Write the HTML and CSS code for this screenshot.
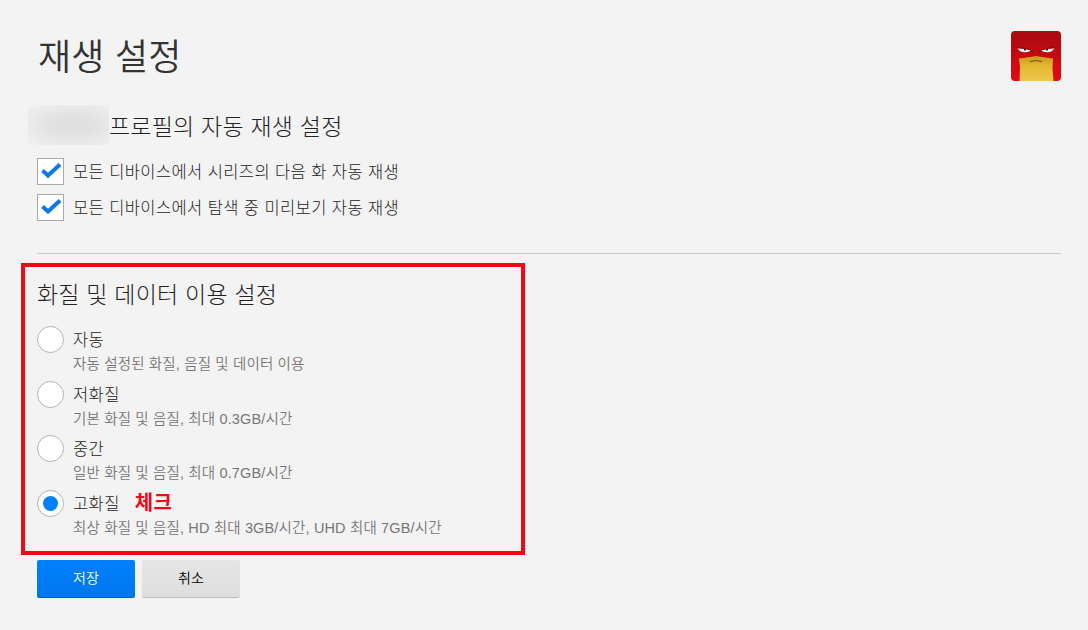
FILE: index.html
```html
<!DOCTYPE html>
<html lang="ko">
<head>
	<meta charset="UTF-8">
	<title>재생 설정</title>
	<link rel="stylesheet" href="styles.css">
</head>
<body>
	<header class="top">
		<h1>재생 설정</h1>
		<svg class="avatar" viewBox="0 0 50 50">
			<defs>
				<linearGradient id="red" x1="0" y1="0" x2="0" y2="1">
					<stop offset="0" stop-color="#a80c10"/>
					<stop offset=".4" stop-color="#bd0b10"/>
					<stop offset="1" stop-color="#e50914"/>
				</linearGradient>
				<linearGradient id="yellow" x1="0" y1="24" x2="0" y2="50" gradientUnits="userSpaceOnUse">
					<stop offset="0" stop-color="#c99620"/>
					<stop offset=".4" stop-color="#e2b62e"/>
					<stop offset="1" stop-color="#eec850"/>
				</linearGradient>
			</defs>
			<rect width="50" height="50" rx="4" fill="url(#red)"/>
			<path d="M8 27.5 L19 26 L25 25 L31 26 L42 27.5 L41.5 37 L42.5 50 H8.5 L9 36 Z" fill="url(#yellow)"/>
			<path d="M6 16.5 L19 18.5 L22 21 M43 16.5 L31 18.5 L28 21" fill="none" stroke="#85090c" stroke-width="1.2"/>
			<path d="M6.5 17.5 Q13 17.5 20 19.5 Q12 24 6.5 17.5 Z M43.5 17.5 Q37 17.5 30 19.5 Q38 24 43.5 17.5 Z" fill="#fff"/>
			<path d="M13 18h2v1.5h-2z M35 18h2v1.5h-2z" fill="#3d1010"/>
			<path d="M19 30.5 Q25 28.8 31 30.5" fill="none" stroke="#675016" stroke-width="1"/>
		</svg>
	</header>
	<section class="autoplay">
		<h2><span class="name"></span>프로필의 자동 재생 설정</h2>
		<div class="check">
			<span class="box"><svg viewBox="0 0 25 25"><path d="M4.5 11.5 L10 16.5 L22 5.5" /></svg></span>
			<span class="label">모든 디바이스에서 시리즈의 다음 화 자동 재생</span>
		</div>
		<div class="check">
			<span class="box"><svg viewBox="0 0 25 25"><path d="M4.5 11.5 L10 16.5 L22 5.5" /></svg></span>
			<span class="label">모든 디바이스에서 탐색 중 미리보기 자동 재생</span>
		</div>
	</section>
	<section class="quality">
		<h2>화질 및 데이터 이용 설정</h2>
		<div class="option">
			<span class="radio"></span>
			<div>
				<p class="label">자동</p>
				<p class="desc">자동 설정된 화질, 음질 및 데이터 이용</p>
			</div>
		</div>
		<div class="option">
			<span class="radio"></span>
			<div>
				<p class="label">저화질</p>
				<p class="desc">기본 화질 및 음질, 최대 0.3GB/시간</p>
			</div>
		</div>
		<div class="option">
			<span class="radio"></span>
			<div>
				<p class="label">중간</p>
				<p class="desc">일반 화질 및 음질, 최대 0.7GB/시간</p>
			</div>
		</div>
		<div class="option">
			<span class="radio on"></span>
			<div>
				<p class="label">고화질<b>체크</b></p>
				<p class="desc">최상 화질 및 음질, HD 최대 3GB/시간, UHD 최대 7GB/시간</p>
			</div>
		</div>
	</section>
	<div class="buttons">
		<button class="save">저장</button>
		<button>취소</button>
	</div>
</body>
</html>
```
FILE: styles.css
```css
*{
	margin: 0;
	padding: 0;
	box-sizing: border-box;
}
body{
	height: 630px;
	overflow: hidden;
	background-color: #f3f3f3;
	color: #222;
	font-family: "Noto Sans CJK KR", sans-serif;
	font-weight: 300;
	white-space: nowrap;
}
.top{
	display: flex;
	justify-content: space-between;
	height: 105px;
	padding: 31px 27px 0 38px;
}
h1{
	height: 50px;
	line-height: 47px;
	color: #333;
	font-size: 36px;
	font-weight: 350;
	letter-spacing: .2px;
}
.avatar{
	width: 50px;
	height: 50px;
}
h2{
	display: flex;
	align-items: center;
	height: 40px;
	line-height: 38px;
	font-size: 23px;
	font-weight: 300;
	letter-spacing: .2px;
}
.autoplay{
	height: 149px;
	margin: 0 27px 0 37px;
	border-bottom: 1px solid #ccc;
}
.name{
	width: 81px;
	height: 40px;
	margin-left: -9px;
	background: radial-gradient(ellipse at 55% 50%, #dedede 0%, #e2e2e2 35%, #f1f1f1 100%);
}
.check{
	display: flex;
	align-items: center;
	height: 27px;
	margin-top: 9px;
}
.autoplay h2 + .check{
	margin-top: 13px;
}
.box{
	width: 27px;
	height: 27px;
	border: 1px solid #aaa;
	background-color: #fff;
}
.box svg{
	display: block;
	width: 25px;
	height: 25px;
	fill: none;
	stroke: #0d78ea;
	stroke-width: 4;
}
.label{
	height: 27px;
	line-height: 27px;
	font-size: 16.5px;
	letter-spacing: .4px;
}
.check .label{
	margin-left: 9px;
}
.quality{
	width: 504px;
	height: 292px;
	margin: 9px 0 0 21px;
	padding: 6px 12px;
	border: 4px solid #ec0a18;
}
.option{
	display: flex;
	gap: 9px;
	height: 54.5px;
}
.quality h2{
	margin-bottom: 13px;
}
.radio{
	display: flex;
	align-items: center;
	justify-content: center;
	width: 27px;
	height: 27px;
	border: 1px solid #b3b3b3;
	border-radius: 50%;
	background-color: #fff;
}
.on::after{
	content: '';
	width: 15px;
	height: 15px;
	border-radius: 50%;
	background-color: #0080ff;
}
.label b{
	margin-left: 15px;
	color: #ec0a18;
	font-size: 20px;
	font-weight: 700;
	line-height: 1;
}
.desc{
	height: 22px;
	line-height: 22px;
	color: #777;
	font-family: "Liberation Sans", "Noto Sans CJK KR", sans-serif;
	font-size: 14.5px;
	font-weight: 350;
	letter-spacing: .15px;
}
.buttons{
	display: flex;
	gap: 7px;
	margin: 5px 0 0 37px;
}
button{
	width: 98px;
	height: 38px;
	padding-bottom: 4px;
	border: none;
	border-radius: 2px;
	background-image: linear-gradient(#e6e6e6, #ddd);
	box-shadow: inset 0 -1px 0 rgba(0, 0, 0, 0.15);
	color: #000;
	font-family: "Noto Sans CJK KR", sans-serif;
	font-size: 14px;
	font-weight: 350;
}
.save{
	background-image: linear-gradient(#0080ff, #0077ea);
	color: #fff;
}
```
